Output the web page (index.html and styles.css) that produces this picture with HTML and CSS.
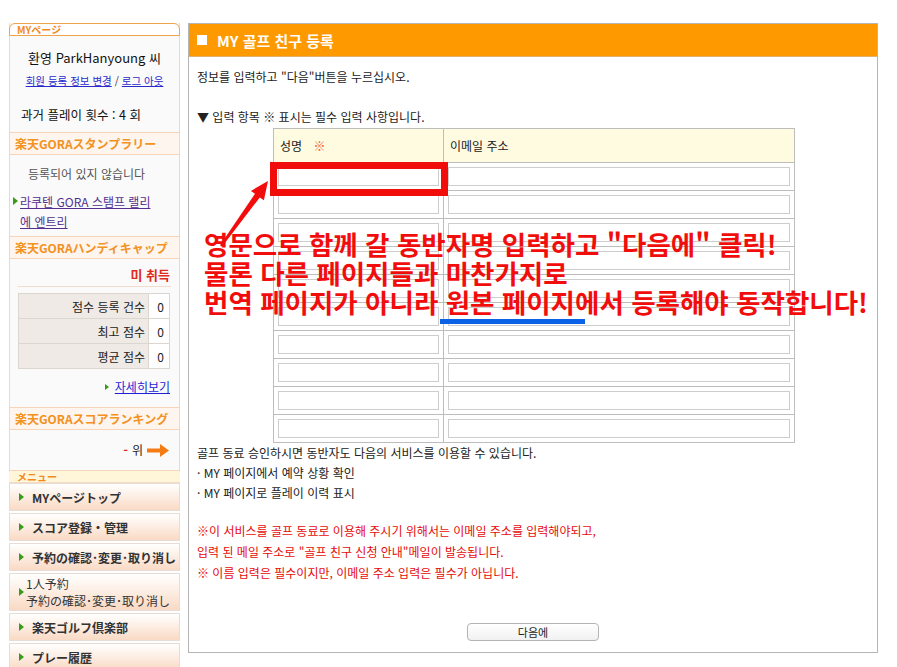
FILE: index.html
```html
<!DOCTYPE html>
<html lang="ko">
<head>
<meta charset="utf-8">
<title>MY 골프 친구 등록</title>
<link rel="stylesheet" href="styles.css">
</head>
<body>
<div class="page">
  <aside class="sidebar">
    <div class="panel">
      <div class="tab" lang="ja">MYページ</div>
      <div class="mybody">
        <div class="welcome">환영 ParkHanyoung 씨</div>
        <div class="acct"><a href="#">회원 등록 정보 변경</a> / <a href="#">로그 아웃</a></div>
        <div class="plays">과거 플레이 횟수 : 4 회</div>
      </div>
      <div class="sec-head" lang="ja">楽天GORAスタンプラリー</div>
      <div class="sec-body sb1">
        <div class="muted">등록되어 있지 않습니다</div>
        <div class="entry"><span class="tri"></span><a class="visited" href="#">라쿠텐 GORA 스탬프 랠리<br>에 엔트리</a></div>
      </div>
      <div class="sec-head" lang="ja">楽天GORAハンディキャップ</div>
      <div class="sec-body sb2">
        <div class="mitoku">미 취득</div>
        <table class="score">
          <tr><th>점수 등록 건수</th><td>0</td></tr>
          <tr><th>최고 점수</th><td>0</td></tr>
          <tr><th>평균 점수</th><td>0</td></tr>
        </table>
        <div class="more"><span class="tri small"></span><a href="#">자세히보기</a></div>
      </div>
      <div class="sec-head" lang="ja">楽天GORAスコアランキング</div>
      <div class="sec-body sb3">
        <div class="rank"><span class="dash">-</span> 위 <svg class="rarrow" width="22" height="13" viewBox="0 0 22 13"><path d="M0 4.5h13V0l9 6.5-9 6.5V8.5H0z" fill="#f47a12"/></svg></div>
      </div>
    </div>
    <div class="menu-head" lang="ja">メニュー</div>
    <ul class="menu" lang="ja">
      <li><span class="tri"></span><span class="mt">MYページトップ</span></li>
      <li><span class="tri"></span><span class="mt">スコア登録・管理</span></li>
      <li><span class="tri"></span><span class="mt">予約の確認･変更･取り消し</span></li>
      <li class="two"><span class="tri"></span><span class="mt2">1人予約<br>予約の確認･変更･取り消し</span></li>
      <li><span class="tri"></span><span class="mt">楽天ゴルフ倶楽部</span></li>
      <li><span class="tri"></span><span class="mt">プレー履歴</span></li>
    </ul>
  </aside>

  <main class="main">
    <div class="main-head"><span class="sq"></span>MY 골프 친구 등록</div>
    <div class="main-body">
      <p class="intro">정보를 입력하고 "다음"버튼을 누르십시오.</p>
      <p class="note">▼ 입력 항목 ※ 표시는 필수 입력 사항입니다.</p>
      <table class="friends">
        <tr><th class="c1">성명 <span class="req">※</span></th><th class="c2">이메일 주소</th></tr>
        <tr><td><input type="text"></td><td><input type="text"></td></tr>
        <tr><td><input type="text"></td><td><input type="text"></td></tr>
        <tr><td><input type="text"></td><td><input type="text"></td></tr>
        <tr><td><input type="text"></td><td><input type="text"></td></tr>
        <tr><td><input type="text"></td><td><input type="text"></td></tr>
        <tr><td><input type="text"></td><td><input type="text"></td></tr>
        <tr><td><input type="text"></td><td><input type="text"></td></tr>
        <tr><td><input type="text"></td><td><input type="text"></td></tr>
        <tr><td><input type="text"></td><td><input type="text"></td></tr>
        <tr><td><input type="text"></td><td><input type="text"></td></tr>
      </table>
      <div class="desc">
        <p>골프 동료 승인하시면 동반자도 다음의 서비스를 이용할 수 있습니다.</p>
        <p>· MY 페이지에서 예약 상황 확인</p>
        <p>· MY 페이지로 플레이 이력 표시</p>
      </div>
      <div class="warn">
        <p>※이 서비스를 골프 동료로 이용해 주시기 위해서는 이메일 주소를 입력해야되고,</p>
        <p>입력 된 메일 주소로 "골프 친구 신청 안내"메일이 발송됩니다.</p>
        <p>※ 이름 입력은 필수이지만, 이메일 주소 입력은 필수가 아닙니다.</p>
      </div>
      <div class="btn-row"><button class="next" type="button">다음에</button></div>
    </div>

    <div class="hl-box"></div>
    <svg class="hl-arrow" width="70" height="85" viewBox="0 0 70 85"><polygon points="58,11 53.9,30.3 49.8,27.4 12,76.7 10,75.3 45,23.8 40.9,20.9" fill="#f20d0d"/></svg>
    <div class="hl-text">영문으로 함께 갈 동반자명 입력하고 "다음에" 클릭!<br>물론 다른 페이지들과 마찬가지로<br>번역 페이지가 아니라 원본 페이지에서 등록해야 동작합니다!</div>
    <div class="hl-line"></div>
  </main>
</div>
</body>
</html>
```
FILE: styles.css
```css
* { box-sizing: border-box; }

body {
  margin: 0;
  background: #fff;
  color: #222;
  font-family: "Noto Sans CJK KR", "Noto Sans", sans-serif;
  font-size: 12px;
}

p { margin: 0; }

[lang="ja"] { font-family: "Noto Sans CJK JP", "Noto Sans", sans-serif; }

.page {
  display: flex;
  align-items: flex-start;
  gap: 8px;
  padding: 23px 0 0 9px;
}

/* ---------- sidebar ---------- */
.sidebar {
  width: 171px;
  flex: none;
}

.panel {
  background: #fafafa;
  border-left: 1px solid #f7d6bd;
  border-right: 1px solid #f7d6bd;
  border-bottom: 1px solid #f7d6bd;
}

.tab {
  margin: 0 -1px;
  height: 13px;
  border: 1px solid #efa44a;
  border-radius: 6px 6px 0 0;
  background: #fff;
  color: #f08a1c;
  font-size: 10px;
  font-weight: bold;
  line-height: 11px;
  padding-left: 7px;
}

.mybody { padding: 12px 0 7px; }

.welcome {
  text-align: center;
  font-size: 13px;
  line-height: 20px;
  color: #111;
}

.acct {
  margin-top: 5px;
  text-align: center;
  font-size: 10.5px;
  line-height: 16px;
  color: #333;
}
.acct a { color: #2a2acc; }

.plays {
  margin-top: 16px;
  padding-left: 11px;
  font-size: 12.5px;
  line-height: 20px;
  color: #111;
}

.sec-head {
  height: 23px;
  border-top: 1px solid #f7d3b7;
  border-bottom: 1px solid #f7d3b7;
  background: #fdf5ee;
  color: #f39121;
  font-size: 12px;
  font-weight: bold;
  line-height: 21px;
  padding-left: 5px;
}

.sec-body { padding: 0 8px; }
.sb1 { padding-top: 9px; padding-bottom: 4px; }
.sb2 { padding-top: 7px; padding-bottom: 11px; }
.sb3 { padding-top: 10px; padding-bottom: 10px; }

.muted {
  padding-left: 10px;
  font-size: 12px;
  line-height: 20px;
  color: #555;
}

.tri {
  display: inline-block;
  width: 0;
  height: 0;
  border-left: 5px solid #3a9a1c;
  border-top: 4px solid transparent;
  border-bottom: 4px solid transparent;
  flex: none;
}
.tri.small {
  border-left-width: 4px;
  border-top-width: 3.5px;
  border-bottom-width: 3.5px;
}

.entry {
  margin: 8px 0 0 -5px;
  display: flex;
  align-items: flex-start;
  gap: 2px;
  font-size: 12px;
  line-height: 20px;
}
.entry .tri { margin-top: 5px; }
.entry a.visited { color: #54308e; }

.mitoku {
  text-align: right;
  color: #e02a1e;
  font-weight: bold;
  font-size: 13px;
  line-height: 18px;
  padding: 0 1px 2px 0;
  border-bottom: 1px solid #f1dccc;
}

.score {
  margin-top: 6px;
  width: 152px;
  border-collapse: collapse;
  font-size: 12px;
}
.score th, .score td {
  border: 1px solid #dcd6d1;
  height: 25px;
  padding: 0 4px 0 0;
  text-align: right;
  font-weight: normal;
  color: #222;
}
.score th { background: #efeae6; width: 130px; padding-right: 3px; }
.score td { background: #fff; padding-right: 5px; }

.more {
  margin-top: 9px;
  display: flex;
  justify-content: flex-end;
  align-items: center;
  gap: 6px;
  padding-right: 1px;
  font-size: 12px;
  line-height: 18px;
}
.more a { color: #1f1fd6; }

.rank {
  display: flex;
  justify-content: flex-end;
  align-items: center;
  gap: 4px;
  line-height: 20px;
  font-size: 12px;
  padding-right: 2px;
}
.rank .dash { color: #e02020; font-weight: bold; }

.menu-head {
  height: 12px;
  background: #fff6d9;
  border-bottom: 1px solid #f5dcc0;
  color: #f08a1c;
  font-size: 10px;
  font-weight: bold;
  line-height: 11px;
  padding-left: 8px;
}

.menu {
  list-style: none;
  margin: 0;
  padding: 0;
}
.menu li {
  height: 28px;
  margin-bottom: 2px;
  border: 1px solid #e6ddd6;
  background: linear-gradient(#ffffff 0%, #fdf1e8 40%, #f9d9c4 100%);
  display: flex;
  align-items: center;
  gap: 8px;
  padding-left: 9px;
  color: #333;
  white-space: nowrap;
}
.menu .mt { font-weight: bold; font-size: 12px; }
.menu li.two {
  height: 38px;
  gap: 2px;
}
.menu .mt2 { font-size: 12px; line-height: 17px; }

/* ---------- main ---------- */
.main {
  position: relative;
  width: 690px;
  flex: none;
  border: 1px solid #b5b5b5;
}

.main-head {
  height: 33px;
  background: #ff9900;
  border-bottom: 1px solid #e3b26a;
  color: #fff;
  font-size: 15px;
  font-weight: bold;
  display: flex;
  align-items: center;
  padding-left: 8px;
}
.sq {
  width: 10px;
  height: 10px;
  background: #fff;
  margin-right: 10px;
}

.main-body { padding: 11px 8px 11px; }

.intro { line-height: 18px; }
.note { margin-top: 22px; line-height: 18px; }

.friends {
  margin: 2px 0 0 76px;
  width: 522px;
  border-collapse: collapse;
}
.friends th {
  background: #fffbe1;
  border: 1px solid #bdbdbd;
  font-weight: normal;
  text-align: left;
  padding: 8px 6px;
  line-height: 17px;
  color: #222;
}
.friends th.c1 { width: 170px; }
.friends .req { color: #f5582a; margin-left: 8px; }
.friends td {
  border: 1px solid #bdbdbd;
  padding: 4px;
}
.friends input {
  display: block;
  width: 100%;
  height: 19px;
  margin: 0;
  padding: 0 2px;
  border: 1px solid #cdcdcd;
  border-radius: 0;
  background: #fff;
  font: inherit;
}

.desc p { line-height: 20px; }

.warn { margin-top: 17px; color: #e60a0a; }
.warn p { line-height: 21px; }

.btn-row {
  margin-top: 40px;
  display: flex;
  justify-content: center;
}
.next {
  width: 132px;
  height: 18px;
  padding: 0;
  border: 1px solid #b4b4b4;
  border-radius: 4px;
  background: linear-gradient(#ffffff, #f1f1f1);
  font-family: "Noto Sans CJK KR", sans-serif;
  font-size: 11px;
  line-height: 16px;
  color: #222;
}

/* ---------- annotations (overlay) ---------- */
.hl-box {
  position: absolute;
  left: 81px;
  top: 138px;
  width: 178px;
  height: 34px;
  border: 7px solid #f20d0d;
}
.hl-arrow {
  position: absolute;
  left: 21px;
  top: 146px;
}
.hl-text {
  position: absolute;
  left: 15px;
  top: 205px;
  white-space: nowrap;
  color: #f20d0d;
  font-size: 26.5px;
  font-weight: bold;
  line-height: 29px;
}
.hl-line {
  position: absolute;
  left: 251px;
  top: 295px;
  width: 145px;
  height: 5px;
  background: #0b62e6;
}
```
